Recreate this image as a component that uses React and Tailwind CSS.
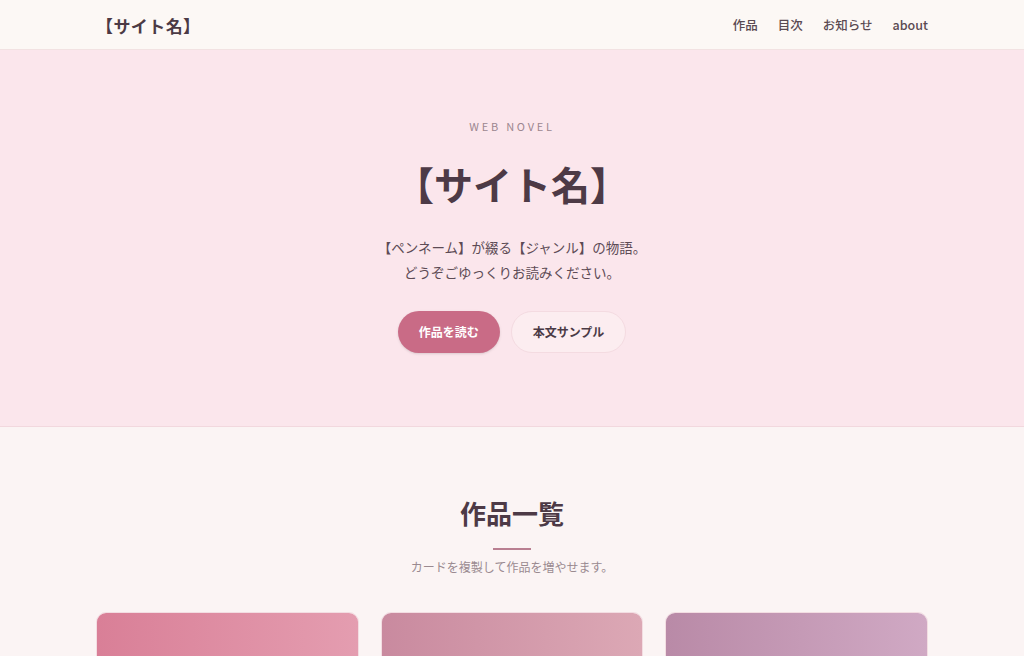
import React from 'react';

const works = [
  'from-[#d97f97] to-[#e49db0]',
  'from-[#c98a9f] to-[#dca8b5]',
  'from-[#b98aa7] to-[#d0a9c4]',
];

export default function App() {
  return (
    <div
      className="min-h-screen bg-[#fbf4f4] text-[#4b3a45]"
      style={{ fontFamily: '"Noto Sans CJK JP", "Noto Sans", sans-serif' }}
    >
      {/* ヘッダー */}
      <header className="bg-[#fcf8f5] border-b border-[#f2e2e2]">
        <div className="mx-auto max-w-[880px] px-6 h-[49px] pt-[2px] flex items-center justify-between">
          <a className="text-[17px] font-bold tracking-wide text-[#4b3a45]">【サイト名】</a>
          <nav className="flex items-center gap-[20px] text-[12.5px] font-medium text-[#5a4a52]">
            <a>作品</a>
            <a>目次</a>
            <a>お知らせ</a>
            <a>about</a>
          </nav>
        </div>
      </header>

      {/* ヒーロー */}
      <section className="bg-[#fbe6ec] border-b border-[#f2d8de] pt-[71px] pb-[73px] text-center">
        <p className="text-[11px] tracking-[0.25em] text-[#9c8790] leading-none">WEB NOVEL</p>
        <h1 className="mt-[26px] text-[39px] font-bold leading-[50px] text-[#4d3a46]">【サイト名】</h1>
        <p className="mt-[27px] text-[13.5px] leading-[25px] text-[#5d4b55]">
          【ペンネーム】が綴る【ジャンル】の物語。
          <br />
          どうぞごゆっくりお読みください。
        </p>
        <div className="mt-[26px] flex items-center justify-center gap-[11px]">
          <a className="h-[42px] px-[21px] inline-flex items-center rounded-full bg-[#c96b86] text-white text-[12px] font-bold shadow-sm">
            作品を読む
          </a>
          <a className="h-[42px] px-[21px] inline-flex items-center rounded-full bg-[#fcedf0] border border-[#f4dbe1] text-[#4b3a45] text-[12px] font-bold">
            本文サンプル
          </a>
        </div>
      </section>

      {/* 作品一覧 */}
      <section className="pt-[69px] pb-16">
        <div className="mx-auto max-w-[880px] px-6">
          <div className="text-center">
            <h2 className="text-[26px] font-bold leading-[34px] text-[#4d3a46]">作品一覧</h2>
            <div className="mx-auto mt-[18px] w-[38px] h-[2px] bg-[#b97f91]" />
            <p className="mt-[8px] text-[12px] text-[#9a8a90]">カードを複製して作品を増やせます。</p>
          </div>
          <div className="mt-[36px] grid grid-cols-3 gap-[22px]">
            {works.map((g, i) => (
              <div key={i} className="rounded-[10px] border border-[#f3dde2] bg-white overflow-hidden">
                <div className={`h-[160px] bg-gradient-to-r ${g}`} />
                <div className="p-4">
                  <h3 className="text-[16px] font-bold">【作品タイトル】</h3>
                </div>
              </div>
            ))}
          </div>
        </div>
      </section>
    </div>
  );
}
